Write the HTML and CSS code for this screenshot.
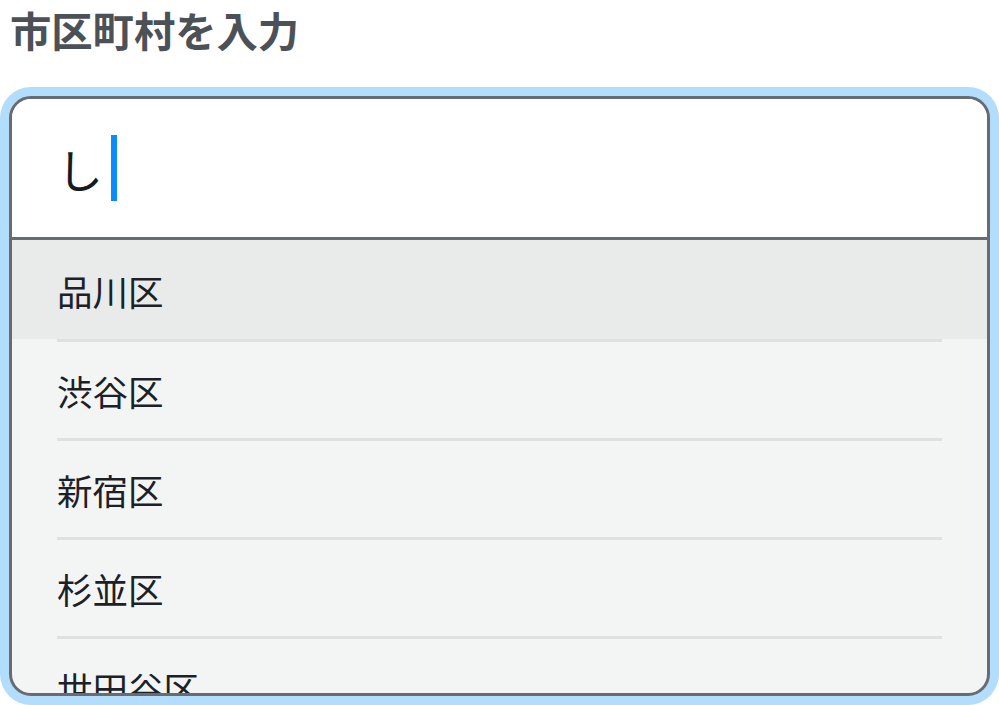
FILE: index.html
```html
<!DOCTYPE html>
<html lang="ja">
<head>
<meta charset="utf-8">
<link rel="stylesheet" href="styles.css">
</head>
<body>
<h1 class="title">市区町村を入力</h1>
<div class="combo">
  <div class="field"><span class="value">し</span><span class="caret"></span></div>
  <ul class="list">
    <li class="item active"><div class="label">品川区</div></li>
    <li class="item"><div class="label">渋谷区</div></li>
    <li class="item"><div class="label">新宿区</div></li>
    <li class="item"><div class="label">杉並区</div></li>
    <li class="item"><div class="label">世田谷区</div></li>
  </ul>
</div>
</body>
</html>
```
FILE: styles.css
```css
html, body {
  margin: 0;
  padding: 0;
  background: #ffffff;
}
body {
  padding: 0 9px;
  font-family: "Noto Sans CJK JP", "Noto Sans", sans-serif;
  overflow: hidden;
  height: 705px;
}
.title {
  margin: 0;
  padding-left: 1px;
  height: 58px;
  line-height: 58px;
  font-size: 41.3px;
  font-weight: 700;
  color: #4b5157;
}
.combo {
  margin-top: 38px;
  height: 600px;
  box-sizing: border-box;
  border: 3px solid #676c72;
  border-radius: 22px;
  box-shadow: 0 0 0 9px #b2ddfd;
  overflow: hidden;
  background: #f3f5f4;
  display: flex;
  flex-direction: column;
}
.field {
  flex: none;
  height: 138px;
  background: #ffffff;
  border-bottom: 3px solid #676c72;
  display: flex;
  align-items: center;
  padding-left: 45px;
}
.value {
  font-size: 46px;
  line-height: 66px;
  color: #161b20;
  font-weight: 400;
}
.caret {
  width: 6px;
  height: 66px;
  margin-left: 8px;
  background: #0a8cff;
}
.list {
  list-style: none;
  margin: 0;
  padding: 0;
}
.item {
  padding: 0 45px;
}
.item.active {
  background: #e9ebea;
}
.label {
  height: 99px;
  box-sizing: border-box;
  display: flex;
  align-items: center;
  padding-top: 1px;
  font-size: 35.5px;
  color: #1b2127;
}
.item + .item .label {
  border-top: 3px solid #dfe1e1;
}
```
